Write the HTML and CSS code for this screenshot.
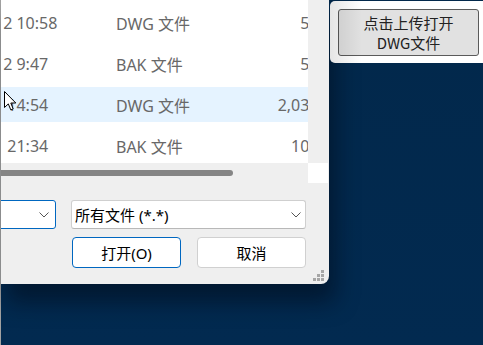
FILE: index.html
```html
<!DOCTYPE html>
<html lang="zh">
<head>
    <meta charset="UTF-8">
    <meta name="viewport" content="width=device-width, initial-scale=1.0">
    <title>打开 DWG 文件</title>
    <link rel="stylesheet" href="styles.css">
</head>
<body>
    <div class="desk">
        <div class="dialog">
            <div class="browser">
                <div class="list">
                    <div class="rows">
                        <div class="row">
                            <span class="date">12 10:58</span>
                            <span class="type">DWG 文件</span>
                            <span class="size">56 KB</span>
                        </div>
                        <div class="row">
                            <span class="date">12 9:47</span>
                            <span class="type">BAK 文件</span>
                            <span class="size">55 KB</span>
                        </div>
                        <div class="row hover">
                            <span class="date">1 14:54</span>
                            <span class="type">DWG 文件</span>
                            <span class="size">2,034 KB</span>
                        </div>
                        <div class="row">
                            <span class="date">1 21:34</span>
                            <span class="type">BAK 文件</span>
                            <span class="size">108 KB</span>
                        </div>
                    </div>
                    <svg class="cursor" width="13" height="21" viewBox="0 0 13 21">
                        <path d="M0.5 0.5 L0.5 16.5 L4.3 12.9 L6.8 18.9 L9.2 17.9 L6.8 12 L11.8 12 Z" fill="#fff" stroke="#000" stroke-width="1" stroke-linejoin="round"/>
                    </svg>
                </div>
                <div class="vscroll"></div>
                <div class="hscroll"><div class="thumb"></div></div>
                <div class="corner"></div>
            </div>

            <div class="footer">
                <div class="fields">
                    <div class="combo combo-name">
                        <svg class="chev" width="10" height="6" viewBox="0 0 10 6"><path d="M0.5 0.5 L5 5 L9.5 0.5" fill="none" stroke="#555" stroke-width="1"/></svg>
                    </div>
                    <div class="combo combo-filter">
                        <span>所有文件 (*.*)</span>
                        <svg class="chev" width="10" height="6" viewBox="0 0 10 6"><path d="M0.5 0.5 L5 5 L9.5 0.5" fill="none" stroke="#555" stroke-width="1"/></svg>
                    </div>
                </div>
                <div class="actions">
                    <button class="btn btn-primary">打开(O)</button>
                    <button class="btn">取消</button>
                </div>
            </div>

            <svg class="grip" width="12" height="12" viewBox="0 0 12 12">
                <rect x="8" y="0" width="3" height="3" fill="#a6a6a6"/>
                <rect x="4" y="4" width="3" height="3" fill="#a6a6a6"/>
                <rect x="8" y="4" width="3" height="3" fill="#a6a6a6"/>
                <rect x="0" y="8" width="3" height="3" fill="#a6a6a6"/>
                <rect x="4" y="8" width="3" height="3" fill="#a6a6a6"/>
                <rect x="8" y="8" width="3" height="3" fill="#a6a6a6"/>
            </svg>
        </div>

        <div class="side">
            <div class="side-panel">
                <button class="upload">点击上传打开<br>DWG文件</button>
            </div>
        </div>
    </div>
</body>
</html>
```

FILE: styles.css
```css
body {
    margin: 0;
    padding: 0;
    width: 483px;
    height: 345px;
    overflow: hidden;
    background: linear-gradient(180deg, #02284b 0%, #022a50 100%);
    font-family: "Noto Sans", "Noto Sans CJK SC", sans-serif;
}

.desk {
    display: flex;
    height: 345px;
    border-left: 1px solid #a2a2a2;
}

.dialog {
    position: relative;
    width: 328px;
    height: 284px;
    background-color: #efefef;
    border-bottom-right-radius: 8px;
    overflow: hidden;
    box-shadow: 6px 18px 22px rgba(0, 8, 20, 0.5);
}

.browser {
    display: grid;
    grid-template-columns: 307px 21px;
    grid-template-rows: 163px 20px;
}

.list {
    position: relative;
    background-color: #fff;
    overflow: hidden;
}

.rows {
    display: flex;
    flex-direction: column;
    gap: 6px;
    padding-top: 5px;
    margin-left: -7px;
}

.row {
    display: grid;
    grid-template-columns: 122px 140px 87px;
    align-items: center;
    height: 35px;
    font-size: 16px;
    color: #686868;
    white-space: nowrap;
}

.row.hover {
    background-color: #e5f3ff;
}

.size {
    text-align: right;
}

.cursor {
    position: absolute;
    left: 3px;
    top: 91px;
}

.vscroll {
    background-color: #efefef;
}

.hscroll {
    display: flex;
    align-items: center;
    background-color: #efefef;
}

.hscroll .thumb {
    width: 232px;
    height: 6px;
    background-color: #858585;
    border-radius: 0 3px 3px 0;
}

.corner {
    background-color: #fff;
    margin-right: 1px;
}

.footer {
    display: flex;
    flex-direction: column;
    gap: 8px;
    padding-top: 17px;
}

.fields {
    display: flex;
    gap: 15px;
    margin-left: -5px;
}

.combo {
    display: flex;
    align-items: center;
    justify-content: space-between;
    box-sizing: border-box;
    height: 29px;
    background-color: #fff;
    border: 1px solid #cfcfcf;
    border-bottom-color: #b8b8b8;
    border-radius: 3px;
    padding: 0 4px 0 3px;
    font-size: 15px;
    color: #000;
}

.combo-name {
    width: 60px;
    border-color: #0067c0;
    justify-content: flex-end;
    padding-right: 6px;
}

.combo-filter {
    width: 235px;
}

.actions {
    display: flex;
    gap: 16px;
    padding-left: 71px;
}

.btn {
    box-sizing: border-box;
    width: 109px;
    height: 31px;
    background-color: #fff;
    border: 1px solid #d0d0d0;
    border-radius: 4px;
    font-family: "Noto Sans", "Noto Sans CJK SC", sans-serif;
    font-size: 15px;
    color: #000;
    padding: 0;
}

.btn-primary {
    border-color: #0067c0;
}

.grip {
    position: absolute;
    right: 4px;
    bottom: 2px;
}

.side {
    flex: 1;
    padding: 1px 0 0 1px;
}

.side-panel {
    position: relative;
    height: 62px;
    background-color: #fff;
    border-radius: 5px 0 0 5px;
    padding: 8px 0 0 8px;
    box-sizing: border-box;
}

.side-panel::before {
    content: "";
    position: absolute;
    left: 0;
    top: 0;
    bottom: 0;
    width: 32px;
    border-radius: 5px 0 0 5px;
    background: linear-gradient(90deg, rgba(0, 0, 0, 0.1), rgba(0, 0, 0, 0.03) 70%, rgba(0, 0, 0, 0));
    pointer-events: none;
}

.upload {
    box-sizing: border-box;
    width: 141px;
    height: 47px;
    background-color: #e1e1e1;
    border: 1px solid #5a5a5a;
    border-radius: 3px;
    font-family: "Noto Sans CJK SC", sans-serif;
    font-size: 15px;
    line-height: 20px;
    color: #222;
    padding: 0;
}
```
